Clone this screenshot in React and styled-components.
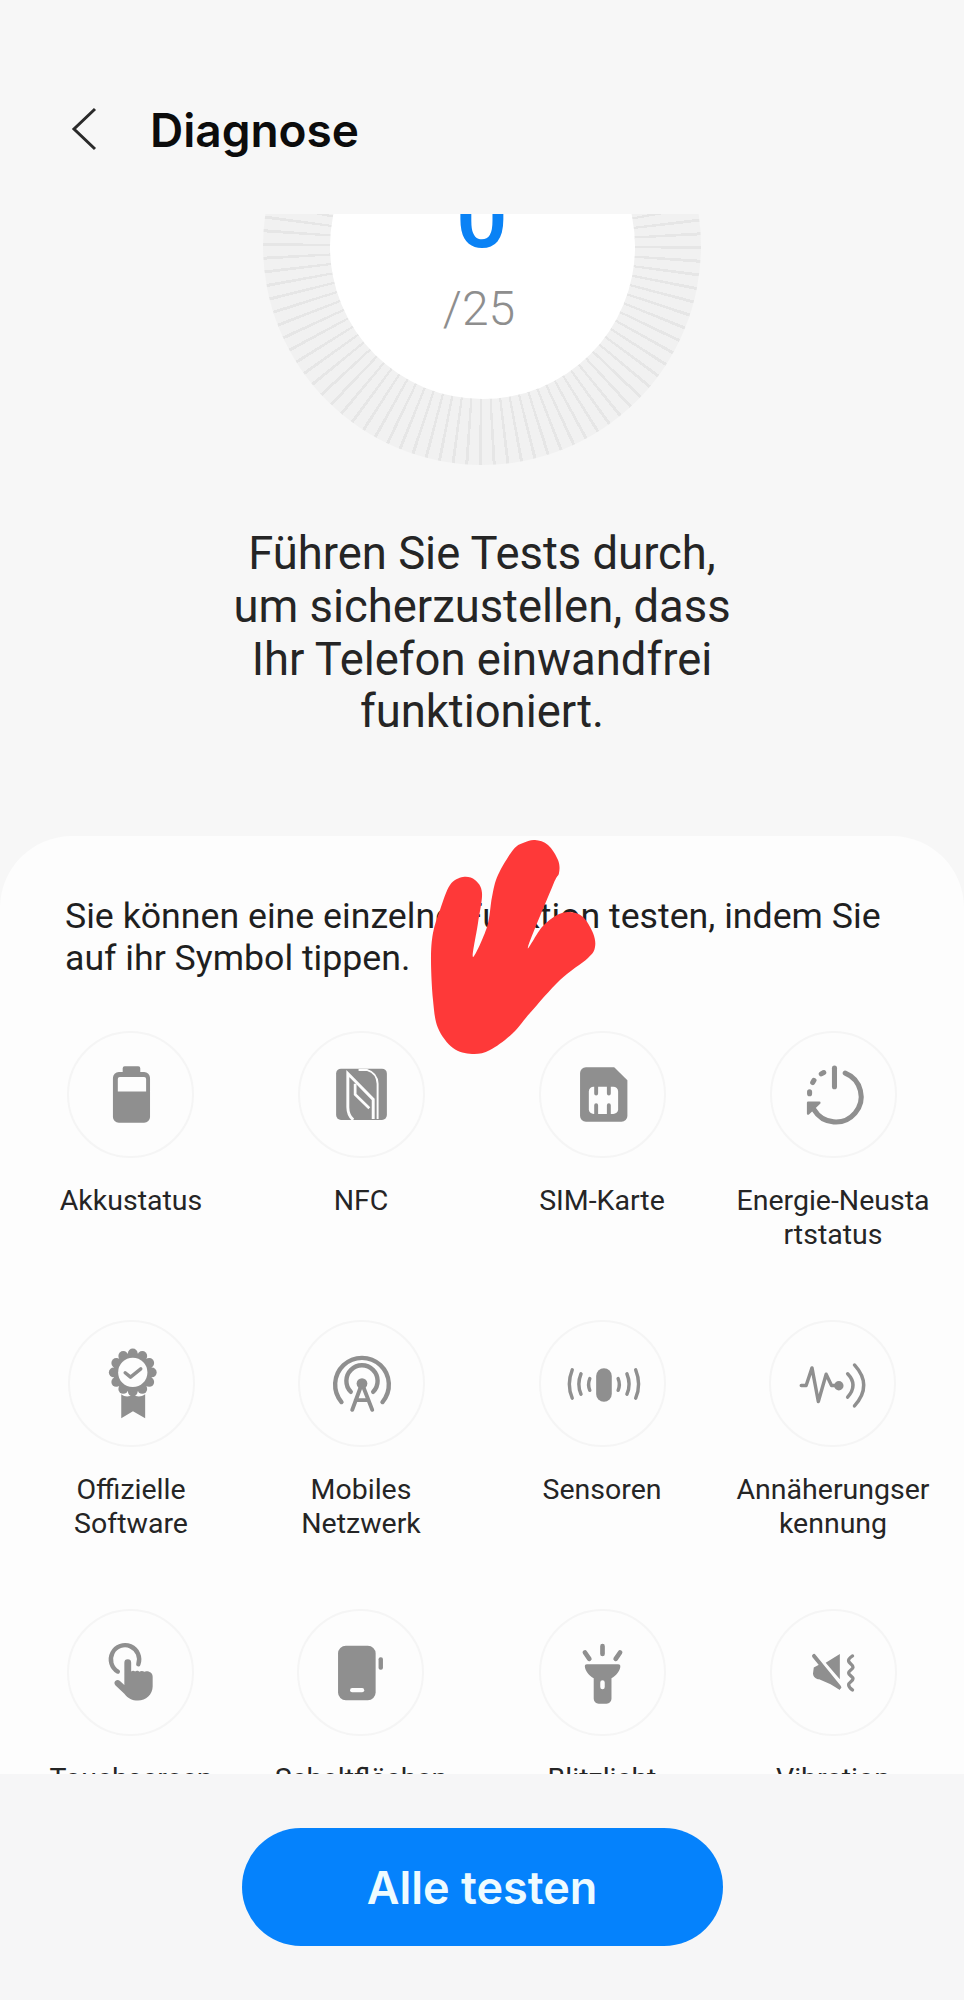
import React from "react"
import styled, { createGlobalStyle } from "styled-components"

const GlobalStyle = createGlobalStyle`
* {
	margin: 0;
	padding: 0;
	box-sizing: border-box;
}
body {
	background-color: #f7f7f7;
	font-family: Roboto, "Liberation Sans", sans-serif;
}
`
const Page = styled.div`
	position: relative;
	display: flex;
	flex-flow: column nowrap;
	width: 964px;
	height: 2000px;
	overflow: hidden;
	background-color: #f7f7f7;
`
const Header = styled.header`
	display: flex;
	flex: 0 0 214px;
	align-items: flex-start;
	gap: 53px;
	padding: 102px 0 0 71px;
`
const Back = styled.svg`
	width: 26px;
	height: 44px;
	margin-top: 5px;
`
const Title = styled.h1`
	font-family: Inter, Roboto, sans-serif;
	font-size: 46px;
	line-height: 56px;
	font-weight: 600;
	color: #0c0c0c;
`
const DialWindow = styled.div`
	display: flex;
	flex: 0 0 266px;
	justify-content: center;
	overflow: hidden;
`
const Ring = styled.div`
	display: flex;
	flex: 0 0 438px;
	height: 438px;
	margin-top: -187px;
	align-items: center;
	justify-content: center;
	border-radius: 50%;
	background: repeating-conic-gradient(#e6e6e6 0deg 0.8deg, #f1f1f1 0.8deg 3.6deg);
`
const Disc = styled.div`
	display: flex;
	flex-flow: column nowrap;
	align-items: center;
	width: 305px;
	height: 305px;
	padding-top: 66px;
	border-radius: 50%;
	background-color: #ffffff;
`
const Score = styled.div`
	font-size: 92px;
	line-height: 112px;
	font-weight: 500;
	color: #0a82f5;
`
const Total = styled.div`
	margin: 8px 6px 0 0;
	font-size: 48px;
	line-height: 58px;
	font-weight: 300;
	color: #8e8e8e;
`
const Intro = styled.p`
	flex: 0 0 auto;
	padding-top: 48px;
	margin-bottom: 97px;
	font-size: 45.4px;
	line-height: 52.8px;
	text-align: center;
	color: #252525;
`
const Panel = styled.section`
	flex: 1 1 0;
	min-height: 0;
	padding: 59px 0 0 16px;
	overflow: hidden;
	border-radius: 72px 72px 0 0;
	background-color: #fdfdfd;
`
const Hint = styled.p`
	padding-left: 49px;
	font-size: 35.7px;
	line-height: 42px;
	color: #1f1f1f;
`
const TestGrid = styled.div`
	display: grid;
	grid-template-columns: 230px 230px 252px 210px;
	grid-auto-rows: 289px;
	justify-items: center;
	margin-top: 52px;
`
const Cell = styled.div`
	display: flex;
	flex-flow: column nowrap;
	align-items: center;
`
const Circle = styled.div`
	width: 127px;
	height: 127px;
	border: 2px solid #f5f5f5;
	border-radius: 50%;
`
const IconSvg = styled.svg`
	display: block;
	width: 123px;
	height: 123px;
	color: #8f8f8f;
`
const Label = styled.div`
	margin-top: 26px;
	font-size: 28.5px;
	line-height: 34px;
	text-align: center;
	white-space: pre-line;
	color: #252525;
`
const Footer = styled.footer`
	display: flex;
	flex: 0 0 226px;
	justify-content: center;
	padding-top: 54px;
	background-color: #f6f6f7;
`
const RunAll = styled.button`
	width: 481px;
	height: 118px;
	border: none;
	border-radius: 59px;
	background-color: #0582fc;
	font-family: Inter, Roboto, sans-serif;
	font-size: 45px;
	font-weight: 600;
	color: #eefbff;
`
const Scribble = styled.svg`
	position: absolute;
	left: 420px;
	top: 830px;
	width: 190px;
	height: 235px;
`

// closed catmull-rom through the traced outline of the red mark
const blobPoints = [
	[513, 850], [523, 843], [535, 840], [548, 845], [558, 860], [559, 873], [553, 885], [528, 947],
	[542, 927], [557, 915], [570, 912], [583, 917], [593, 933], [595, 947], [588, 958], [560, 980],
	[530, 1013], [513, 1033], [490, 1050], [472, 1054], [453, 1048], [438, 1028], [433, 1000], [431, 960],
	[433, 933], [440, 910], [450, 885], [463, 877], [475, 880], [482, 893], [478, 923], [473, 957],
	[487, 927], [492, 897], [498, 875]
]
const blobPath = blobPoints
	.map((p, i, a) => {
		const n = a.length
		const p0 = a[(i - 1 + n) % n]
		const p2 = a[(i + 1) % n]
		const p3 = a[(i + 2) % n]
		const c1 = [p[0] + (p2[0] - p0[0]) / 6, p[1] + (p2[1] - p0[1]) / 6]
		const c2 = [p2[0] - (p3[0] - p[0]) / 6, p2[1] - (p3[1] - p[1]) / 6]
		return `${i === 0 ? `M${p[0]} ${p[1]} ` : ""}C${c1[0]} ${c1[1]} ${c2[0]} ${c2[1]} ${p2[0]} ${p2[1]}`
	})
	.join(" ") + "Z"

const scallops = Array.from({ length: 12 }, (_, i) => {
	const a = (i * Math.PI) / 6
	return [64.3 + 19.5 * Math.cos(a), 51.7 + 19.5 * Math.sin(a)]
})

const icons = {
	battery: (
		<path fill="currentColor" fillRule="evenodd" d="M57 34h14a2 2 0 0 1 2 2v4h4a6 6 0 0 1 6 6v40a6 6 0 0 1-6 6H51a6 6 0 0 1-6-6V46a6 6 0 0 1 6-6h4v-4a2 2 0 0 1 2-2ZM52 45a2 2 0 0 0-2 2v13h29V47a2 2 0 0 0-2-2Z" />
	),
	nfc: (
		<>
			<rect x="37" y="36.5" width="52" height="52.5" rx="5" fill="currentColor" />
			<g fill="none" stroke="#fdfdfd" strokeLinejoin="miter">
				<path strokeWidth="3" d="M54.500 89Q49 84 49 76V41.500L75 68V88" />
				<path strokeWidth="2.800" d="M56.500 52V63L71 77" />
				<path strokeWidth="2" d="M60 38H69Q79 41 79.500 52V88" />
			</g>
		</>
	),
	sim: (
		<>
			<path fill="currentColor" d="M46 35h29l13.5 13.5V85a6 6 0 0 1-6 6H46a6 6 0 0 1-6-6V41a6 6 0 0 1 6-6Z" />
			<rect x="49" y="55" width="30" height="28" rx="5" fill="#fdfdfd" />
			<path stroke="currentColor" strokeWidth="4" strokeLinecap="round" d="M56.5 54v8M69.5 54v8M56.5 74v9M69.5 74v9" />
		</>
	),
	restart: (
		<>
			<g fill="none" stroke="currentColor" strokeWidth="5.200" strokeLinecap="round">
				<path d="M64 36V55" />
				<path d="M75 41A26 26 0 1 1 43 78.500" />
				<path d="M53 40.500l-2.500 1.400M43 48.500l-1.300 2.300M38.500 60.300v2" />
			</g>
			<path fill="currentColor" stroke="currentColor" strokeWidth="2.500" strokeLinejoin="round" d="M37 71.500H48.500L37 82.500Z" />
		</>
	),
	award: (
		<>
			<path fill="currentColor" d="M52.5 74c4 3 8 3 12 0 4 3 8 3 12.5 0v24.500l-12.500-7-12 7Z" />
			{scallops.map(([x, y], i) => (
				<circle key={i} cx={x} cy={y} r="5" fill="currentColor" />
			))}
			<circle cx="64.300" cy="51.700" r="20" fill="currentColor" />
			<circle cx="64.300" cy="51.700" r="15" fill="#fdfdfd" />
			<path fill="none" stroke="currentColor" strokeWidth="3.500" strokeLinecap="round" strokeLinejoin="round" d="M56.500 52l5.500 4.500 10.500-8.500" />
		</>
	),
	antenna: (
		<>
			<g fill="none" stroke="currentColor" strokeLinecap="round">
				<path strokeWidth="4.500" d="M42.500 82a27.500 27.500 0 1 1 42 0" />
				<path strokeWidth="4.500" d="M52 71.500a16 16 0 1 1 23 0" />
				<path strokeWidth="4" d="M63.500 63L53.500 90M63.500 63L74 90M57 80h13" />
			</g>
			<circle cx="63.500" cy="63" r="5.500" fill="currentColor" />
		</>
	),
	sensors: (
		<>
			<rect x="56.500" y="47.300" width="16" height="34.500" rx="8" fill="currentColor" />
			<path fill="none" stroke="currentColor" strokeWidth="3.500" strokeLinecap="round" d="M50 58q-2.500 6 0 12M41 53q-4.500 11 0 21M32 49q-6 15 0 29M79 58q2.500 6 0 12M88 53q4.500 11 0 21M97 49q6 15 0 29" />
		</>
	),
	proximity: (
		<>
			<path fill="none" stroke="currentColor" strokeWidth="3.500" strokeLinecap="round" strokeLinejoin="round" d="M31 65h5L42 47l6.500 34.500 8-28L62 65h7M78.500 53q11 11.500 0 24M85.500 44q19 21 0 42" />
			<circle cx="69.500" cy="65.300" r="4.800" fill="currentColor" />
		</>
	),
	touch: (
		<>
			<path fill="none" stroke="currentColor" strokeWidth="4.500" strokeLinecap="round" d="M50 62a14.500 14.500 0 1 1 21-7.500" />
			<path fill="currentColor" d="M56.700 53a3.500 3.500 0 0 1 7 0v9c1-1 3-1 4 0 1-1.200 3.500-1.200 4.500.300 1-1.200 3.500-1.300 5 0 1-1 4.500-1 6 .500 1.500 1 2.500 2.500 2.500 4.500v10c0 8-7 14.500-15 14.500-6 0-10-2-14-7l-9-8.500c-1.500-1.500-1.500-3.500-.3-4.600 1.500-1.300 3.300-1.300 4.800 0l4.500 4Z" />
		</>
	),
	phone: (
		<>
			<rect x="40" y="35.500" width="38.500" height="56" rx="8" fill="currentColor" />
			<rect x="52.300" y="79" width="14.500" height="4.300" rx="2.100" fill="#fdfdfd" />
			<rect x="81.500" y="47.300" width="4.500" height="12.800" rx="2" fill="currentColor" />
		</>
	),
	torch: (
		<>
			<path fill="none" stroke="currentColor" strokeWidth="4.800" strokeLinecap="round" d="M63 36v8M45 42.500l4.500 6.500M81 42.500l-4.500 6.500" />
			<path fill="currentColor" fillRule="evenodd" d="M47 54.500h32c2 0 2.500 1.300 2.200 3-.7 4-4.200 8.500-9 11.500v21a5 5 0 0 1-5 5H59a5 5 0 0 1-5-5V69c-4.800-3-8.300-7.500-9-11.500-.3-1.700.2-3 2-3ZM63 71a2.300 2.300 0 0 0-2.300 2.300v4.500a2.300 2.300 0 0 0 4.600 0v-4.500A2.300 2.300 0 0 0 63 71Z" />
		</>
	),
	muted: (
		<>
			<path fill="currentColor" d="M55 53L69.500 44V70ZM42.800 58L50 54L69.500 77V81L60 75L48.300 70C45 70 42 67 42 64Z" />
			<path fill="none" stroke="currentColor" strokeWidth="4" strokeLinecap="round" d="M43 46L69 78" />
			<path fill="none" stroke="currentColor" strokeWidth="3.400" strokeLinecap="round" strokeLinejoin="round" d="M82.500 46c-3 2-4.500 4-4 5.500.5 2 4.500 3.500 4.500 6s-4.500 3.500-4.500 6 4.500 3.500 4.500 6-4.500 3.500-4.500 6 1.500 3.500 4 5.500" />
		</>
	)
}

const tests = [
	{ icon: "battery", label: "Akkustatus" },
	{ icon: "nfc", label: "NFC" },
	{ icon: "sim", label: "SIM-Karte" },
	{ icon: "restart", label: "Energie-Neusta\nrtstatus" },
	{ icon: "award", label: "Offizielle\nSoftware" },
	{ icon: "antenna", label: "Mobiles\nNetzwerk" },
	{ icon: "sensors", label: "Sensoren" },
	{ icon: "proximity", label: "Annäherungser\nkennung" },
	{ icon: "touch", label: "Touchscreen" },
	{ icon: "phone", label: "Schaltflächen" },
	{ icon: "torch", label: "Blitzlicht" },
	{ icon: "muted", label: "Vibration" }
]

const App = () => {
	return (
		<>
			<GlobalStyle />
			<Page>
				<Header>
					<Back viewBox="0 0 26 44">
						<path d="M24 2L3 22l21 20" fill="none" stroke="#2a2a2a" strokeWidth="3" />
					</Back>
					<Title>Diagnose</Title>
				</Header>
				<DialWindow>
					<Ring>
						<Disc>
							<Score>0</Score>
							<Total>/25</Total>
						</Disc>
					</Ring>
				</DialWindow>
				<Intro>
					Führen Sie Tests durch,
					<br />
					um sicherzustellen, dass
					<br />
					Ihr Telefon einwandfrei
					<br />
					funktioniert.
				</Intro>
				<Panel>
					<Hint>
						Sie können eine einzelne Funktion testen, indem Sie
						<br />
						auf ihr Symbol tippen.
					</Hint>
					<TestGrid>
						{tests.map(t => (
							<Cell key={t.icon}>
								<Circle>
									<IconSvg viewBox="0 0 126 126">{icons[t.icon]}</IconSvg>
								</Circle>
								<Label>{t.label}</Label>
							</Cell>
						))}
					</TestGrid>
				</Panel>
				<Footer>
					<RunAll>Alle testen</RunAll>
				</Footer>
				<Scribble viewBox="420 830 190 235">
					<path d={blobPath} fill="#fe3939" />
				</Scribble>
			</Page>
		</>
	)
}
export default App
